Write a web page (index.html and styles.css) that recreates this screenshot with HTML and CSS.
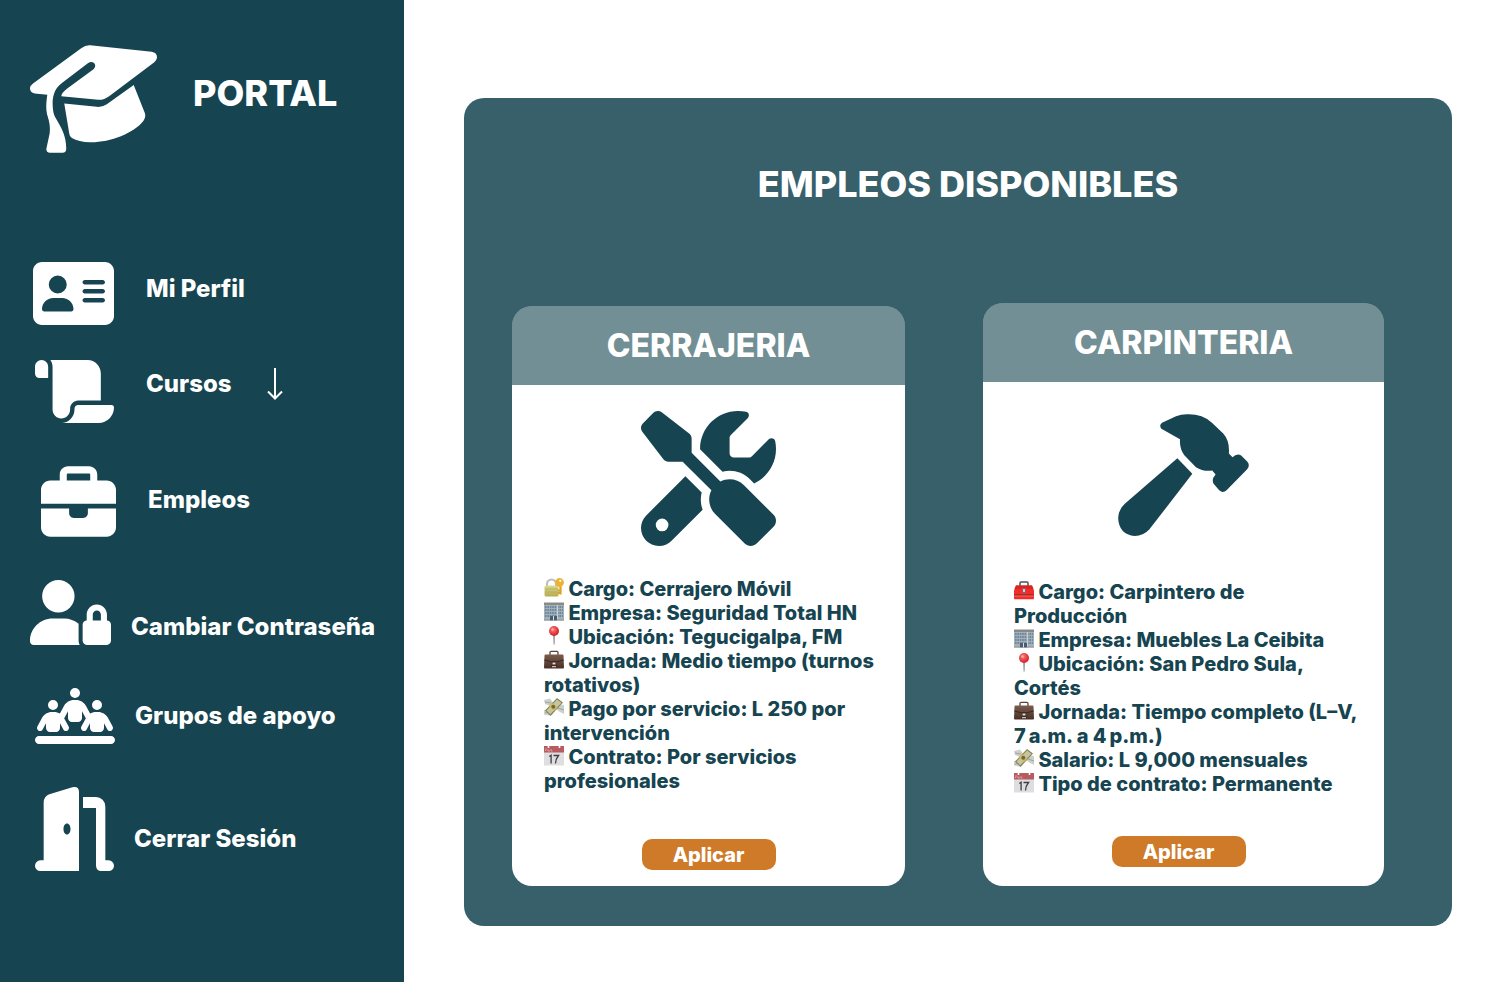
FILE: index.html
```html
<!DOCTYPE html>
<html lang="es">
<head>
<meta charset="utf-8">
<meta name="viewport" content="width=device-width, initial-scale=1">
<title>Portal - Empleos disponibles</title>
<link rel="stylesheet" href="styles.css">
</head>
<body>
<svg class="sprite" aria-hidden="true">
  <defs>
    <linearGradient id="gold" x1="0" y1="0" x2="0" y2="1"><stop offset="0" stop-color="#dcd98f"/><stop offset="1" stop-color="#b5ac4e"/></linearGradient>
    <linearGradient id="leather" x1="0" y1="0" x2="0" y2="1"><stop offset="0" stop-color="#7b5b4c"/><stop offset="1" stop-color="#493027"/></linearGradient>
    <radialGradient id="ball" cx="0.4" cy="0.35" r="0.6"><stop offset="0" stop-color="#ff8078"/><stop offset="1" stop-color="#d3232b"/></radialGradient>
  </defs>
  <symbol id="lock" viewBox="0 0 20 20">
    <path d="M3 9V6a4.500 4.500 0 0 1 9 0v3" fill="none" stroke="#b9bcc0" stroke-width="2"/>
    <rect x="0.500" y="7.500" width="14" height="11" rx="1.500" fill="url(#gold)"/>
    <path d="M1 11h13M1 14h13" stroke="#a9a55a" stroke-width="0.600"/>
    <path d="M16.500 7v9.500M16 12.500h-2M16 15h-2" stroke="#e0a021" stroke-width="2.200" fill="none"/>
    <circle cx="15.500" cy="4.500" r="4.400" fill="#eeb232"/><circle cx="16.200" cy="2.800" r="1.100" fill="#fff"/>
  </symbol>
  <symbol id="office" viewBox="0 0 20 20">
    <path d="M0 2h20v16.500H0z" fill="#a6b0b8"/><path d="M0 0.500h20v2.500H0z" fill="#8b8986"/>
    <path d="M1 5h18M1 8h18M1 11h18M1 14h18" stroke="#557b99" stroke-width="1.700" stroke-dasharray="1.600 0.800"/>
    <path d="M13 3h1v15h-1z" fill="#c9ced2"/><path d="M6 14h7v4.500H6z" fill="#485d6d"/><path d="M9 14h1v4.500H9z" fill="#d7dde0"/>
    <path d="M0 17.500h6v1H0zM13 17.500h7v1h-7z" fill="#8c9299"/>
  </symbol>
  <symbol id="pin" viewBox="0 0 20 20">
    <path d="M9.200 8h1.700l-0.300 10.500h-1z" fill="#8f8c8d"/><circle cx="10" cy="5" r="5" fill="url(#ball)"/><circle cx="8.500" cy="3.500" r="1.200" fill="#ffaaa4"/>
  </symbol>
  <symbol id="case" viewBox="0 0 20 20">
    <path d="M6 5V2.500q0-1.200 1.200-1.200h5.600q1.200 0 1.200 1.200V5" fill="none" stroke="#59443b" stroke-width="1.300"/>
    <path d="M1.500 4.500h17q1 0 1 1l0.500 12q0 1-1 1H1q-1 0-1-1l0.500-12q0-1 1-1z" fill="url(#leather)"/>
    <path d="M0.300 10l7.700 2h4l7.700-2" fill="none" stroke="#382219" stroke-width="0.900"/><path d="M8 11h4v2.200l1 3.800H7l1-3.800z" fill="#3d2922"/><path d="M8.500 12.500h3v2h-3z" fill="#ddd"/><path d="M8 16h4v1.200H8z" fill="#c9c2bb"/>
  </symbol>
  <symbol id="money" viewBox="0 0 20 20">
    <path d="M0 2l6-1.500 3 4-3 3.500-5-2zM20 7l-6-1-2 5 4 3 4 2zM0 12l6-1 3 5-4 1.500-5-1z" fill="#ccd0cb"/><path d="M1 4l6 1M14 10l6 2M1 15l5-1" stroke="#8f9b8c" stroke-width="0.800"/>
    <path d="M13 0l6 4.500L6.500 18 1 12.500z" fill="#81855b"/><path d="M13 1.500l4.500 3.300L6.300 16.300 2.500 12.500z" fill="#c8c59c"/>
    <path d="M8 5l5 5-3 3-5-5z" fill="#d7b95a"/><circle cx="9.300" cy="8.800" r="2" fill="#6d6b3d"/>
  </symbol>
  <symbol id="calendar" viewBox="0 0 20 20">
    <path d="M0 0h20v19.500H0z" fill="#dedee0"/><path d="M0 0h20v6.500H0z" fill="#b75b60"/>
    <path d="M4.500 0v2M15.500 0v2" stroke="#fff" stroke-width="1.600"/><path d="M2 2v2.500H1M4 3v2h2M7 3v2h1.500" stroke="#e7b9bc" stroke-width="0.700" fill="none"/>
    <path d="M5.300 10.500l1.800-1.300v8.300M9.500 9.500h5c-2 2.500-3 5-3 8" fill="none" stroke="#3f3f42" stroke-width="1.300"/>
  </symbol>
  <symbol id="toolbox" viewBox="0 0 20 20">
    <path d="M6 5V2q0-1 1-1h6q1 0 1 1v3" fill="none" stroke="#4e5158" stroke-width="1.500"/>
    <path d="M2 4.500h16l2 5V17.500q0 0.800-0.800 0.800H0.800Q0 18.300 0 17.500V9.500z" fill="#f02d2b"/><path d="M2 4.500h16l1.500 3.500H0.500z" fill="#d62526"/>
    <path d="M0 14h20" stroke="#7c2525" stroke-width="1"/><path d="M0 15h20" stroke="#ff8179" stroke-width="0.700"/>
    <path d="M8 7h4v5.500H8z" fill="#a8525a"/><path d="M9 8h2v3H9z" fill="#d5c7cb"/>
  </symbol>
</svg>
<div class="layout">
  <aside class="sidebar">
    <div class="brand">
      <svg class="brand-icon" width="127" height="108" viewBox="89 74 382 325" aria-hidden="true">
        <path d="M141 224L103 220Q88 216 89 203Q90 196 98 190L243 84Q256 74 270 75L455 94Q472 97 471 112Q470 120 463 126L327 228Q311 240 294 239L183 228C184 220 190 214 200 206L280 147C294 132 277 119 264 128L185 188C165 202 157 225 157 248C157 270 160 285 167 295C185 325 198 350 198 386Q198 398 187 398H149Q138 398 138 387L148 340C151 315 145 300 140 282C136 262 138 245 141 224z"/>
        <path d="M192 250L290 260Q305 262 320 252L401 194L435 280Q438 290 430 303C400 340 330 368 270 367Q235 366 215 354Q208 350 207 340z"/>
      </svg>
      <span class="brand-name">PORTAL</span>
    </div>
    <nav class="menu" aria-label="Principal">
      <a class="item item-profile" href="#perfil">
        <svg width="81" height="63" viewBox="0 32 576 448" aria-hidden="true"><path fill-rule="evenodd" d="M64 32C28.700 32 0 60.700 0 96V416c0 35.300 28.700 64 64 64H512c35.300 0 64-28.700 64-64V96c0-35.300-28.700-64-64-64H64zm80 256h64c44.200 0 80 35.800 80 80c0 8.800-7.200 16-16 16H80c-8.800 0-16-7.200-16-16c0-44.200 35.800-80 80-80zm-32-96a64 64 0 1 1 128 0 64 64 0 1 1 -128 0zm256-32H496c8.800 0 16 7.200 16 16s-7.200 16-16 16H368c-8.800 0-16-7.200-16-16s7.200-16 16-16zm0 64H496c8.800 0 16 7.200 16 16s-7.200 16-16 16H368c-8.800 0-16-7.200-16-16s7.200-16 16-16zm0 64H496c8.800 0 16 7.200 16 16s-7.200 16-16 16H368c-8.800 0-16-7.200-16-16s7.200-16 16-16z"/></svg>
        <span class="label">Mi Perfil</span>
      </a>
      <a class="item item-courses" href="#cursos">
        <svg width="79" height="63" viewBox="0 32 576 448" preserveAspectRatio="none" aria-hidden="true"><path d="M0 80v48c0 17.700 14.300 32 32 32H48 96V80c0-26.500-21.500-48-48-48S0 53.500 0 80zM112 32c10 13.400 16 30 16 48V384c0 35.300 28.700 64 64 64s64-28.700 64-64v-5.300c0-32.400 26.300-58.700 58.700-58.700H480V128c0-53-43-96-96-96H112zM464 480c61.900 0 112-50.100 112-112c0-8.800-7.200-16-16-16H314.700c-14.700 0-26.700 11.900-26.700 26.700V384c0 53-43 96-96 96H368h96z"/></svg>
        <span class="label">Cursos
          <svg class="arrow" width="16" height="32" viewBox="0 0 16 32" aria-hidden="true"><path d="M8 0v30M1 23.500l7 7 7-7" fill="none" stroke="#fff" stroke-width="2"/></svg>
        </span>
      </a>
      <a class="item item-jobs" href="#empleos" aria-current="page">
        <svg width="75" height="71" viewBox="0 0 512 480" aria-hidden="true"><path d="M184 48H328c4.400 0 8 3.600 8 8V96H176V56c0-4.400 3.600-8 8-8zm-56 8V96H64C28.700 96 0 124.700 0 160v96H192 320 512V160c0-35.300-28.700-64-64-64H384V56c0-30.900-25.100-56-56-56H184c-30.900 0-56 25.100-56 56zM512 288H320v32c0 17.700-14.300 32-32 32H224c-17.700 0-32-14.300-32-32V288H0V416c0 35.300 28.700 64 64 64H448c35.300 0 64-28.700 64-64V288z"/></svg>
        <span class="label">Empleos</span>
      </a>
      <a class="item item-password" href="#contrasena">
        <svg width="81" height="65" viewBox="0 0 640 512" aria-hidden="true"><path d="M224 256A128 128 0 1 0 224 0a128 128 0 1 0 0 256zm-45.700 48C79.800 304 0 383.800 0 482.300C0 498.700 13.300 512 29.700 512H392.600c-5.400-9.400-8.600-20.300-8.600-32V352c0-2.100 .1-4.200 .3-6.300c-31-26-71-41.700-114.600-41.700H178.300zM528 240c17.700 0 32 14.300 32 32v48H496V272c0-17.700 14.300-32 32-32zm-80 32v48c-17.700 0-32 14.300-32 32V480c0 17.700 14.300 32 32 32H608c17.700 0 32-14.300 32-32V352c0-17.700-14.300-32-32-32V272c0-44.200-35.800-80-80-80s-80 35.800-80 80z"/></svg>
        <span class="label">Cambiar Contraseña</span>
      </a>
      <a class="item" href="#grupos">
        <svg width="80" height="56" viewBox="0 32 640 448" aria-hidden="true"><path d="M360 72a40 40 0 1 0 -80 0 40 40 0 1 0 80 0zM144 208a40 40 0 1 0 0-80 40 40 0 1 0 0 80zM32 416c-17.700 0-32 14.300-32 32s14.300 32 32 32H608c17.700 0 32-14.300 32-32s-14.300-32-32-32H32zM496 208a40 40 0 1 0 0-80 40 40 0 1 0 0 80zM200 313.500l26.900 49.900c6.300 11.700 20.800 16 32.500 9.800s16-20.800 9.800-32.500l-36.300-67.500c1.700-1.700 3.200-3.600 4.300-5.800L264 217.500V272c0 17.700 14.300 32 32 32h48c17.700 0 32-14.300 32-32V217.500l26.900 49.900c1.200 2.200 2.600 4.100 4.300 5.800l-36.300 67.500c-6.300 11.700-1.900 26.200 9.800 32.500s26.200 1.900 32.500-9.800L440 313.500V352c0 17.700 14.300 32 32 32h48c17.700 0 32-14.300 32-32V313.500l26.900 49.900c6.300 11.700 20.800 16 32.500 9.800s16-20.800 9.800-32.500l-37.900-70.300c-15.300-28.500-45.100-46.300-77.500-46.300H486.200c-16.300 0-31.900 4.500-45.400 12.600l-33.600-62.300c-15.300-28.500-45.100-46.300-77.500-46.300H310.200c-32.400 0-62.100 17.800-77.500 46.300l-33.600 62.300c-13.500-8.100-29.100-12.600-45.400-12.600H134.200c-32.400 0-62.100 17.800-77.500 46.300L18.900 340.600c-6.300 11.700-1.900 26.200 9.800 32.500s26.200 1.900 32.500-9.800L88 313.500V352c0 17.700 14.300 32 32 32h48c17.700 0 32-14.300 32-32V313.500z"/></svg>
        <span class="label">Grupos de apoyo</span>
      </a>
      <a class="item item-exit" href="#salir">
        <svg width="79" height="84" viewBox="45 351 237 252" aria-hidden="true"><path fill-rule="evenodd" d="M45 587a16 16 0 0 1 16-16h10V397Q72 379 88 373L157 352Q177 348 177 366V603H61a16 16 0 0 1-16-16zM141 460.500c-6 0-10.500 7-10.500 16.500s4.500 16.500 10.500 16.500 10.500-7 10.500-16.500-4.500-16.500-10.500-16.500z"/><path d="M189 381h39a28 29 0 0 1 28 29v161h10a16 16 0 0 1 0 32h-22q-15 0-16-16V414h-39z"/></svg>
        <span class="label">Cerrar Sesión</span>
      </a>
    </nav>
  </aside>
  <main class="main">
    <section class="panel">
      <h1 class="title">EMPLEOS DISPONIBLES</h1>
      <div class="cards">
        <article class="card">
          <h2 class="card-head">CERRAJERIA</h2>
          <div class="art">
            <svg width="135" height="135" viewBox="0 0 512 512" aria-hidden="true"><path fill-rule="evenodd" d="M78.600 5C69.100-2.400 55.600-1.500 47 7L7 47c-8.500 8.500-9.400 22-2.100 31.600l80 104c4.500 5.900 11.600 9.400 19 9.400h54.100l109 109c-14.700 29-10 65.400 14.300 89.600l112 112c12.500 12.500 32.800 12.500 45.300 0l64-64c12.500-12.500 12.500-32.800 0-45.300l-112-112c-24.200-24.200-60.600-29-89.600-14.300l-109-109V104c0-7.500-3.500-14.500-9.400-19L78.600 5zM19.900 396.100C7.200 408.800 0 426.100 0 444.100C0 481.600 30.400 512 67.900 512c18 0 35.300-7.200 48-19.900L233.700 374.300c-7.800-20.900-9-43.600-3.600-65.100l-61.700-61.700L19.900 396.100zM512 144c0-10.500-1.100-20.700-3.200-30.500c-2.400-11.200-16.100-14.100-24.200-6l-63.900 63.900c-3 3-7.100 4.700-11.300 4.700H352c-8.800 0-16-7.200-16-16V102.600c0-4.200 1.700-8.300 4.700-11.300l63.900-63.900c8.100-8.100 5.200-21.800-6-24.200C388.700 1.100 378.500 0 368 0C288.500 0 224 64.500 224 144l0 .8 85.300 85.300c36-9.100 75.800 .5 104 28.700L429 274.500c49-23 83-72.800 83-130.500zM56 432a24 24 0 1 1 48 0 24 24 0 1 1 -48 0z"/></svg>
          </div>
          <ul class="facts">
            <li><svg class="emoji"><use href="#lock"/></svg> Cargo: Cerrajero Móvil</li>
            <li><svg class="emoji"><use href="#office"/></svg> Empresa: Seguridad Total HN</li>
            <li><svg class="emoji"><use href="#pin"/></svg> Ubicación: Tegucigalpa, FM</li>
            <li><svg class="emoji"><use href="#case"/></svg> Jornada: Medio tiempo (turnos rotativos)</li>
            <li><svg class="emoji"><use href="#money"/></svg> Pago por servicio: L 250 por intervención</li>
            <li><svg class="emoji"><use href="#calendar"/></svg> Contrato: Por servicios profesionales</li>
          </ul>
          <button class="apply" type="button">Aplicar</button>
        </article>
        <article class="card card-wood">
          <h2 class="card-head">CARPINTERIA</h2>
          <div class="art">
            <svg width="131" height="122" viewBox="84 41 393 367" aria-hidden="true"><path d="M216 67L258 48Q275 41 296 42Q338 42 366 67L400 100Q420 122 417 160L428 171Q442 157 454 166L472 184Q482 195 472 207L410 270Q399 281 388 270L373 253Q362 240 377 223L367 211Q340 215 318 201L283 165Q268 145 270 117L214 85Q206 75 216 67z"/><path d="M262 174L307 221L178 388Q160 408 134 408Q86 404 84 354Q84 330 104 311z"/></svg>
          </div>
          <ul class="facts">
            <li><svg class="emoji"><use href="#toolbox"/></svg> Cargo: Carpintero de Producción</li>
            <li><svg class="emoji"><use href="#office"/></svg> Empresa: Muebles La Ceibita</li>
            <li><svg class="emoji"><use href="#pin"/></svg> Ubicación: San Pedro Sula, Cortés</li>
            <li><svg class="emoji"><use href="#case"/></svg> Jornada: Tiempo completo (L–V, 7&#8239;a.m. a 4&#8239;p.m.)</li>
            <li><svg class="emoji"><use href="#money"/></svg> Salario: L 9,000 mensuales</li>
            <li><svg class="emoji"><use href="#calendar"/></svg> Tipo de contrato: Permanente</li>
          </ul>
          <button class="apply" type="button">Aplicar</button>
        </article>
      </div>
    </section>
  </main>
</div>
</body>
</html>
```
FILE: styles.css
```css
* { box-sizing: border-box; }
body {
  margin: 0;
  font-family: Inter, "Liberation Sans", sans-serif;
  font-weight: 800;
  color: #164450;
  background: #fff;
}
h1, h2, ul { margin: 0; padding: 0; font-weight: inherit; }
svg { display: block; flex: none; fill: currentColor; }
.sprite { position: absolute; width: 0; height: 0; }

.layout { display: flex; min-height: 100vh; }

.sidebar {
  flex: none;
  width: 404px;
  padding-top: 45px;
  background: #164450;
  color: #fff;
}
.brand {
  display: flex;
  align-items: center;
  gap: 36px;
  padding-left: 30px;
  margin-bottom: 109px;
}
.brand-name { font-size: 36px; line-height: 44px; padding-bottom: 12px; }

.menu { display: flex; flex-direction: column; gap: 43px; }
.item {
  display: flex;
  align-items: center;
  gap: 20px;
  padding-left: 35px;
  color: inherit;
  text-decoration: none;
  font-size: 24px;
  line-height: 36px;
}
.label { display: flex; align-items: center; gap: 35px; }
.item-profile { gap: 32px; padding-left: 33px; margin-bottom: -8px; }
.item-profile .label { padding-bottom: 10px; }
.item-courses { gap: 32px; }
.item-courses .label { padding-bottom: 16px; }
.item-jobs { gap: 32px; padding-left: 41px; }
.item-jobs .label { padding-bottom: 4px; }
.item-password { align-items: flex-end; padding-left: 30px; }
.item-exit .label { padding-top: 20px; }

.main { flex: 1; min-width: 0; padding: 98px 60px 56px; }
.panel {
  padding: 64px 68px 40px 48px;
  border-radius: 20px;
  background: #37606a;
}
.title {
  padding-left: 40px;
  margin-bottom: 97px;
  font-size: 36px;
  line-height: 44px;
  text-align: center;
  color: #fff;
}
.cards {
  display: grid;
  grid-template-columns: 393fr 401fr;
  gap: 78px;
  align-items: end;
}
.card {
  display: flex;
  flex-direction: column;
  align-items: center;
  padding-bottom: 16px;
  border-radius: 20px;
  background: linear-gradient(#718f94 40px, #fff 40px);
}
.card-head {
  align-self: stretch;
  padding: 20px 0 19px;
  border-radius: 20px 20px 0 0;
  font-size: 32px;
  line-height: 40px;
  text-align: center;
  color: #fff;
  background: #718f94;
}
.art { padding: 26px 0 31px; }
.facts {
  align-self: stretch;
  padding: 0 26px 0 32px;
  margin-bottom: 46px;
  list-style: none;
  font-size: 20px;
  line-height: 24px;
}
.emoji { display: inline-block; width: 20px; height: 20px; vertical-align: -2px; }
.apply {
  width: 134px;
  height: 31px;
  padding: 0;
  border: 0;
  border-radius: 10px;
  font: inherit;
  font-size: 20px;
  line-height: 24px;
  color: #fff;
  background: #ce7a28;
  cursor: pointer;
}
.card-wood { padding-bottom: 19px; }
.card-wood .art { padding: 32px 0 44px; }
.card-wood .facts { padding-left: 31px; margin-bottom: 40px; }
.card-wood .apply { margin-right: 10px; }
```
